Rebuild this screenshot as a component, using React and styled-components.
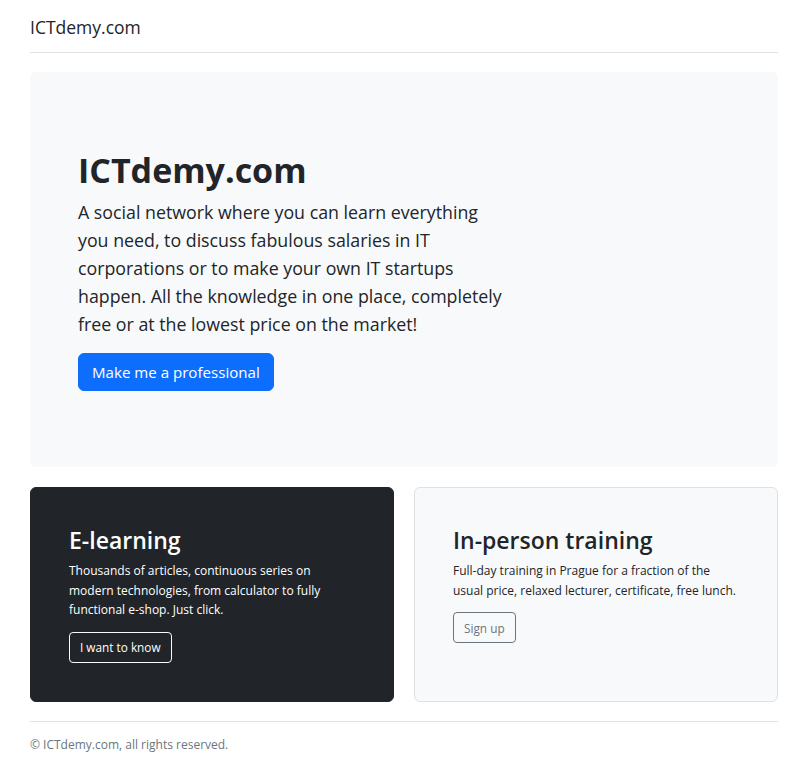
import React from "react";
import styled, { createGlobalStyle } from "styled-components";

const GlobalStyle = createGlobalStyle`
    body {
        margin: 0;
        background: #fff;
        color: #212529;
        font-family: "Open Sans", "Noto Sans", sans-serif;
    }
`

const Page = styled.div`
    width: 748px;
    margin-left: 30px;
    padding-top: 12px;
`

const Header = styled.header`
    padding-bottom: 10px;
    border-bottom: 1px solid #dee2e6;
    margin-bottom: 19px;
`

const Brand = styled.span`
    font-size: 17.5px;
    line-height: 30px;
    color: #212529;
`

const Jumbotron = styled.section`
    background: #f8f9fa;
    border-radius: 6px;
    padding: 76px 48px;
    margin-bottom: 20px;
`

const Title = styled.h1`
    margin: 0 0 6px;
    font-size: 34px;
    font-weight: 700;
    line-height: 44px;
`

const Lead = styled.p`
    margin: 0 0 15px;
    width: 430px;
    font-size: 17.8px;
    line-height: 28px;
`

const Button = styled.button`
    display: inline-block;
    font-family: inherit;
    border-radius: ${p => (p.$large ? "6px" : "4px")};
    font-size: ${p => (p.$large ? "15.1px" : "11.8px")};
    line-height: ${p => (p.$large ? "24px" : "18px")};
    padding: ${p => (p.$large ? "6px 13px" : "5.5px 10px")};
    cursor: pointer;
    background: ${p => p.$bg || "transparent"};
    color: ${p => p.$color};
    border: 1px solid ${p => p.$border};
`

const Row = styled.div`
    display: grid;
    grid-template-columns: 1fr 1fr;
    gap: 20px;
    margin-bottom: 19px;
`

const Card = styled.div`
    padding: 38px;
    border-radius: 6px;
    background: ${p => (p.$dark ? "#212529" : "#f8f9fa")};
    color: ${p => (p.$dark ? "#fff" : "#212529")};
    border: 1px solid ${p => (p.$dark ? "#212529" : "#dee2e6")};
`

const CardTitle = styled.h2`
    margin: 0 0 6px;
    font-size: 23px;
    font-weight: 600;
    line-height: 29px;
`

const CardText = styled.p`
    margin: 0 0 12px;
    font-size: 12px;
    line-height: 19.5px;
`

const Footer = styled.footer`
    border-top: 1px solid #dee2e6;
    padding-top: 14px;
    font-size: 12px;
    color: #6c757d;
`

export default function App() {
    return (
        <>
            <GlobalStyle />
            <Page>
                <Header>
                    <Brand>ICTdemy.com</Brand>
                </Header>
                <Jumbotron>
                    <Title>ICTdemy.com</Title>
                    <Lead>
                        A social network where you can learn everything you need, to discuss fabulous salaries in IT
                        corporations or to make your own IT startups happen. All the knowledge in one place, completely
                        free or at the lowest price on the market!
                    </Lead>
                    <Button $large $bg="#0d6efd" $color="#fff" $border="#0d6efd">Make me a professional</Button>
                </Jumbotron>
                <Row>
                    <Card $dark>
                        <CardTitle>E-learning</CardTitle>
                        <CardText>
                            Thousands of articles, continuous series on modern technologies, from calculator to fully
                            functional e-shop. Just click.
                        </CardText>
                        <Button $color="#fff" $border="#f8f9fa">I want to know</Button>
                    </Card>
                    <Card>
                        <CardTitle>In-person training</CardTitle>
                        <CardText>
                            Full-day training in Prague for a fraction of the usual price, relaxed lecturer, certificate,
                            free lunch.
                        </CardText>
                        <Button $color="#6c757d" $border="#6c757d">Sign up</Button>
                    </Card>
                </Row>
                <Footer>© ICTdemy.com, all rights reserved.</Footer>
            </Page>
        </>
    )
}
